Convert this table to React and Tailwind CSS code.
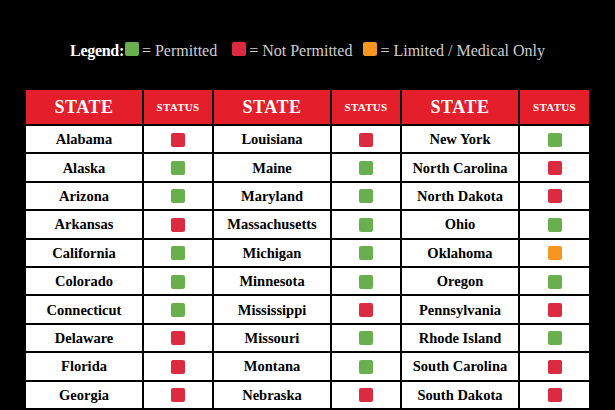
import React from "react";

const RED = "bg-[#dc2a40]";
const GREEN = "bg-[#6aaf4e]";
const ORANGE = "bg-[#f6951f]";

const rows = [
  [["Alabama", "r"], ["Louisiana", "r"], ["New York", "g"]],
  [["Alaska", "g"], ["Maine", "g"], ["North Carolina", "r"]],
  [["Arizona", "g"], ["Maryland", "g"], ["North Dakota", "r"]],
  [["Arkansas", "r"], ["Massachusetts", "g"], ["Ohio", "g"]],
  [["California", "g"], ["Michigan", "g"], ["Oklahoma", "o"]],
  [["Colorado", "g"], ["Minnesota", "g"], ["Oregon", "g"]],
  [["Connecticut", "g"], ["Mississippi", "r"], ["Pennsylvania", "r"]],
  [["Delaware", "r"], ["Missouri", "g"], ["Rhode Island", "g"]],
  [["Florida", "r"], ["Montana", "g"], ["South Carolina", "r"]],
  [["Georgia", "r"], ["Nebraska", "r"], ["South Dakota", "r"]],
];

const colorFor = { r: RED, g: GREEN, o: ORANGE };

const Swatch = ({ color }) => (
  <span className={`inline-block w-[14px] h-[14px] rounded-[2px] ${color}`} />
);

const App = () => {
  return (
    <div
      className="w-[615px] h-[410px] overflow-hidden bg-black"
      style={{ fontFamily: '"Liberation Serif", serif' }}
    >
      {/* legend */}
      <div className="pt-[41px] h-[61px] flex items-center justify-center text-[16px] leading-5 text-[#cfcfcf]">
        <span className="font-bold text-white tracking-[-0.3px]">Legend:</span>
        <span className="ml-[1px] mr-[3px]"><Swatch color={GREEN} /></span>
        <span>= Permitted</span>
        <span className="ml-[15px] mr-[3px]"><Swatch color={RED} /></span>
        <span>= Not Permitted</span>
        <span className="ml-[11px] mr-[3px]"><Swatch color={ORANGE} /></span>
        <span>= Limited / Medical Only</span>
      </div>

      {/* table */}
      <div className="mt-[29px] ml-[26px] grid grid-cols-[116px_68px_116px_68px_116px_69px] grid-rows-[34px] auto-rows-[26.4px] gap-[2px] w-max">
        {[0, 1, 2].map((i) => (
          <React.Fragment key={`h${i}`}>
            <div className="bg-[#e41e2b] text-white font-bold text-[18px] tracking-[0.5px] flex items-center justify-center">
              STATE
            </div>
            <div className="bg-[#e41e2b] text-white font-bold text-[11px] tracking-[0.3px] flex items-center justify-center">
              STATUS
            </div>
          </React.Fragment>
        ))}
        {rows.map((row, ri) =>
          row.map(([name, s], ci) => (
            <React.Fragment key={`${ri}-${ci}`}>
              <div className="bg-white text-black font-bold text-[14.5px] pt-[2px] flex items-center justify-center">
                {name}
              </div>
              <div className="bg-white pt-[1px] flex items-center justify-center">
                <Swatch color={colorFor[s]} />
              </div>
            </React.Fragment>
          ))
        )}
      </div>
    </div>
  );
};

export default App;
